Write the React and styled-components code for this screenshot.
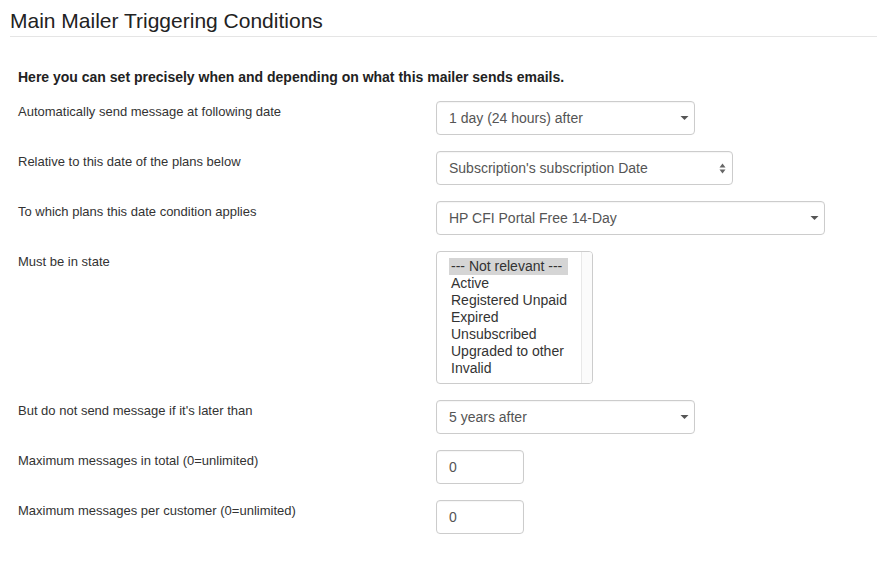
import React from "react";
import styled, { createGlobalStyle } from "styled-components";

const GlobalStyle = createGlobalStyle`
  body {
    margin: 0;
    background: #fff;
    font-family: "Liberation Sans", Arial, sans-serif;
    color: #333;
  }
`;

const Page = styled.div`
  width: 877px;
  height: 563px;
  overflow: hidden;
  padding-top: 9px;
  box-sizing: border-box;
`;

const Title = styled.h3`
  margin: 0 0 0 10px;
  padding-bottom: 3px;
  border-bottom: 1px solid #e5e5e5;
  font-size: 21px;
  font-weight: 400;
  line-height: 24px;
  color: #222;
`;

const Intro = styled.p`
  margin: 32px 0 16px 18px;
  font-size: 14px;
  font-weight: 700;
  line-height: 16px;
  color: #222;
`;

const Rows = styled.div`
  display: grid;
  grid-template-columns: 418px 1fr;
  row-gap: 16px;
  padding-left: 18px;
`;

const Label = styled.div`
  font-size: 13px;
  line-height: 16px;
  padding-top: 3px;
  color: #333;
`;

const Control = styled.div`
  position: relative;
  box-sizing: border-box;
  width: ${(p) => p.$w}px;
  height: 34px;
  border: 1px solid #ccc;
  border-radius: 4px;
  padding: 0 12px;
  display: flex;
  align-items: center;
  font-size: 14px;
  color: #555;
  background: #fff;
  box-shadow: inset 0 1px 1px rgba(0, 0, 0, 0.04);
`;

const Caret = styled.span`
  position: absolute;
  right: 4px;
  top: 50%;
  transform: translateY(-50%);
  width: 12px;
  height: 12px;
  display: flex;
  align-items: center;
  justify-content: center;
`;

const ListBox = styled.div`
  box-sizing: border-box;
  width: 157px;
  height: 133px;
  border: 1px solid #ccc;
  border-radius: 4px;
  display: flex;
  overflow: hidden;
  font-size: 14px;
`;

const Options = styled.div`
  flex: 1;
  padding: 6px 0 0 12px;
`;

const Option = styled.div`
  display: inline-block;
  padding: 0 2px;
  line-height: 17px;
  color: #333;
  background: ${(p) => (p.$selected ? "#d5d5d5" : "transparent")};
  min-width: ${(p) => (p.$selected ? "119px" : "0")};
  box-sizing: border-box;
`;

const Track = styled.div`
  width: 10px;
  border-left: 1px solid #e8e8e8;
  background: #fbfbfb;
`;

const DownCaret = () => (
  <svg width="9" height="6" viewBox="0 0 9 6">
    <path d="M0.5 1h8L4.5 5z" fill="#555" />
  </svg>
);

const UpDown = () => (
  <svg width="7" height="11" viewBox="0 0 7 11">
    <path d="M3.5 0.5L6.5 4.5H0.5z" fill="#666" />
    <path d="M3.5 10.5L6.5 6.5H0.5z" fill="#666" />
  </svg>
);

const Select = ({ w, value, updown }) => (
  <Control $w={w}>
    {value}
    <Caret>{updown ? <UpDown /> : <DownCaret />}</Caret>
  </Control>
);

const states = [
  "--- Not relevant ---",
  "Active",
  "Registered Unpaid",
  "Expired",
  "Unsubscribed",
  "Upgraded to other",
  "Invalid",
];

export default function App() {
  return (
    <Page>
      <GlobalStyle />
      <Title>Main Mailer Triggering Conditions</Title>
      <Intro>Here you can set precisely when and depending on what this mailer sends emails.</Intro>
      <Rows>
        <Label>Automatically send message at following date</Label>
        <Select w={259} value="1 day (24 hours) after" />

        <Label>Relative to this date of the plans below</Label>
        <Select w={297} value="Subscription's subscription Date" updown />

        <Label>To which plans this date condition applies</Label>
        <Select w={389} value="HP CFI Portal Free 14-Day" />

        <Label>Must be in state</Label>
        <ListBox>
          <Options>
            {states.map((s, i) => (
              <div key={s}>
                <Option $selected={i === 0}>{s}</Option>
              </div>
            ))}
          </Options>
          <Track />
        </ListBox>

        <Label>But do not send message if it's later than</Label>
        <Select w={259} value="5 years after" />

        <Label>Maximum messages in total (0=unlimited)</Label>
        <Control $w={88}>0</Control>

        <Label>Maximum messages per customer (0=unlimited)</Label>
        <Control $w={88}>0</Control>
      </Rows>
    </Page>
  );
}
